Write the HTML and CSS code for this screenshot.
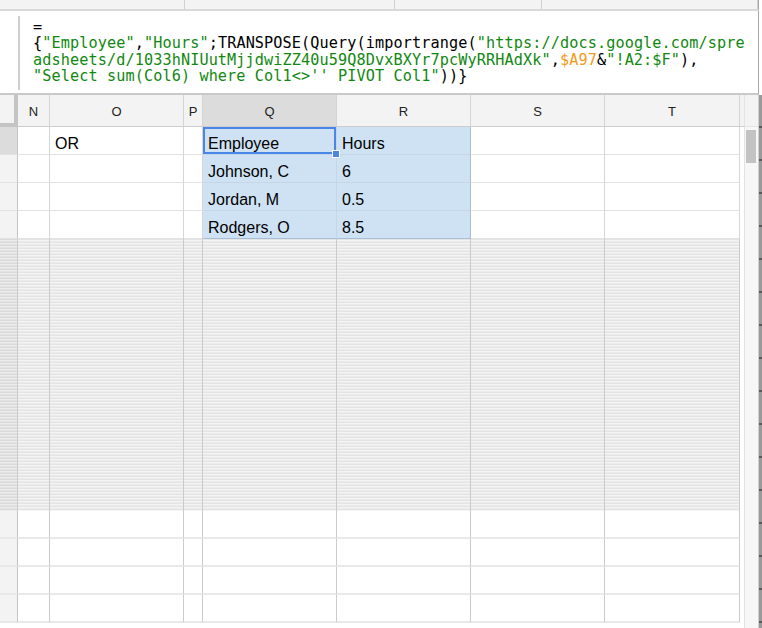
FILE: index.html
```html
<!DOCTYPE html>
<html>
<head>
<meta charset="utf-8">
<link rel="stylesheet" href="styles.css">
</head>
<body>
<div class="app">
  <div class="topstrip">
    <div class="ts c1"></div><div class="ts c2"></div><div class="ts c3"></div><div class="ts c4"></div><div class="ts c5"></div>
  </div>
  <div class="formula">
    <div class="fx">
      <div class="ln">=</div>
      <div class="ln">{<span class="g">"Employee"</span>,<span class="g">"Hours"</span>;TRANSPOSE(Query(importrange(<span class="g">"https://docs.google.com/spre</span></div>
      <div class="ln"><span class="g">adsheets/d/1033hNIUutMjjdwiZZ40u59Q8DvxBXYr7pcWyRRHAdXk"</span>,<span class="o">$A97</span>&amp;<span class="g">"!A2:$F"</span>),</div>
      <div class="ln"><span class="g">"Select sum(Col6) where Col1&lt;&gt;'' PIVOT Col1"</span>))}</div>
    </div>
  </div>
  <div class="sheet">
    <div class="grid">
      <div class="row hdr">
        <div class="cell rh corner"></div>
        <div class="cell ch">N</div>
        <div class="cell ch">O</div>
        <div class="cell ch">P</div>
        <div class="cell ch sel">Q</div>
        <div class="cell ch">R</div>
        <div class="cell ch">S</div>
        <div class="cell ch">T</div>
      </div>
      <div class="row">
        <div class="cell rh rsel"></div>
        <div class="cell"></div>
        <div class="cell">OR</div>
        <div class="cell"></div>
        <div class="cell rng active">Employee<span class="handle"></span></div>
        <div class="cell rng rr">Hours</div>
        <div class="cell"></div>
        <div class="cell"></div>
      </div>
      <div class="row">
        <div class="cell rh"></div>
        <div class="cell"></div>
        <div class="cell"></div>
        <div class="cell"></div>
        <div class="cell rng">Johnson, C</div>
        <div class="cell rng rr">6</div>
        <div class="cell"></div>
        <div class="cell"></div>
      </div>
      <div class="row">
        <div class="cell rh"></div>
        <div class="cell"></div>
        <div class="cell"></div>
        <div class="cell"></div>
        <div class="cell rng">Jordan, M</div>
        <div class="cell rng rr">0.5</div>
        <div class="cell"></div>
        <div class="cell"></div>
      </div>
      <div class="row">
        <div class="cell rh"></div>
        <div class="cell"></div>
        <div class="cell"></div>
        <div class="cell"></div>
        <div class="cell rng rb">Rodgers, O</div>
        <div class="cell rng rr rb">8.5</div>
        <div class="cell"></div>
        <div class="cell"></div>
      </div>
      <div class="row hidden">
        <div class="cell rh"></div>
        <div class="cell"></div>
        <div class="cell"></div>
        <div class="cell"></div>
        <div class="cell"></div>
        <div class="cell"></div>
        <div class="cell"></div>
        <div class="cell"></div>
      </div>
      <div class="row lo">
        <div class="cell rh"></div><div class="cell"></div><div class="cell"></div><div class="cell"></div><div class="cell"></div><div class="cell"></div><div class="cell"></div><div class="cell"></div>
      </div>
      <div class="row lo">
        <div class="cell rh"></div><div class="cell"></div><div class="cell"></div><div class="cell"></div><div class="cell"></div><div class="cell"></div><div class="cell"></div><div class="cell"></div>
      </div>
      <div class="row lo">
        <div class="cell rh"></div><div class="cell"></div><div class="cell"></div><div class="cell"></div><div class="cell"></div><div class="cell"></div><div class="cell"></div><div class="cell"></div>
      </div>
      <div class="row lo">
        <div class="cell rh"></div><div class="cell"></div><div class="cell"></div><div class="cell"></div><div class="cell"></div><div class="cell"></div><div class="cell"></div><div class="cell"></div>
      </div>
    </div>
    <div class="gutter">
      <div class="ghead"></div>
    </div>
    <div class="vscroll">
      <div class="vhead"></div>
      <div class="track"><div class="thumb"></div></div>
    </div>
    <div class="edge"></div>
  </div>
</div>
</body>
</html>
```

FILE: styles.css
```css
* { box-sizing: border-box; }
html, body { margin: 0; padding: 0; background: #fff; }
body { width: 762px; height: 628px; overflow: hidden; font-family: "Liberation Sans", Arial, sans-serif; }

.app { width: 762px; height: 628px; display: flex; flex-direction: column; }

.topstrip {
  height: 11px; flex: none; display: flex;
  background: #f3f3f3; border-bottom: 2px solid #d9d9d9;
  border-right: 1px solid #a8a8a8; width: 759px;
}
.ts { height: 100%; border-right: 1px solid #d0d0d0; }
.ts.c1 { width: 185px; }
.ts.c2 { width: 210px; }
.ts.c3 { width: 147px; }
.ts.c4 { width: 215px; border-right: none; }

.formula {
  height: 84px; flex: none; width: 759px;
  padding: 5px 0 3px 18px;
  border-bottom: 2px solid #c9c9c9;
  border-right: 1px solid #a8a8a8;
  background: #fff;
}
.fx {
  height: 100%;
  border-left: 2px solid #cfcfcf;
  padding: 3px 0 0 13px;
  font-family: "DejaVu Sans Mono", "Liberation Mono", monospace;
  font-size: 15.2px; line-height: 16.3px; color: #000;
  letter-spacing: 0.1px;
}
.ln { height: 16.3px; white-space: pre; }
.g { color: #118811; }
.o { color: #f39a1e; }

.sheet { flex: 1; display: flex; min-height: 0; }
.grid { width: 740px; flex: none; display: flex; flex-direction: column; }

.row {
  display: grid;
  grid-template-columns: 18px 32px 134px 19px 134px 134px 134px 135px;
  height: 28px; flex: none;
}
.cell {
  border-right: 1px solid #d6d6d6;
  border-bottom: 1px solid #e2e2e2;
  font-size: 16px; color: #000;
  padding: 6px 0 0 5px;
  display: flex; align-items: center;
  position: relative;
  white-space: nowrap;
}
.row.hdr { height: 32px; }
.ch {
  background: #f3f3f3; border-bottom: 1px solid #cccccc; border-right-color: #d4d4d4;
  justify-content: center; padding: 1px 0 0 0; font-size: 13px; color: #222;
}
.ch.sel { background: #dcdcdc; }
.rh { background: #f3f3f3; border-right: 1px solid #c4c4c4; padding: 0; }
.rh.rsel { background: #dcdcdc; }
.corner {
  border-right: 4px solid #c4c4c4; border-bottom: 4px solid #c4c4c4;
  background: #f3f3f3;
}

.rng { background: #cfe2f3; border-bottom-color: #c5d6e6; border-right-color: #c5d6e6; }
.rng.rr { border-right-color: #a7bed6; }
.rng.rb { border-bottom-color: #a7bed6; }
.active { box-shadow: inset 0 0 0 2px #4a86e8; }
.handle {
  position: absolute; right: -4px; bottom: -4px;
  width: 8px; height: 8px; background: #4a86e8;
  border: 1px solid #fff; z-index: 2;
}

.row.hidden { height: 272px; }
.hidden .cell {
  border-bottom: none;
  background: repeating-linear-gradient(to bottom, #e4e4e4 0 1px, #f4f4f4 1px 2px, #ebebeb 2px 3px);
  border-right-color: #cbcbcb;
}
.hidden .rh {
  background: repeating-linear-gradient(to bottom, #dadada 0 1px, #ececec 1px 2px, #e2e2e2 2px 3px);
}
.lo .cell { border-bottom: 2px solid #e9e9e9; border-right-color: #cbcbcb; }
.lo .rh { background: #f3f3f3; border-right-color: #c4c4c4; }

.gutter { width: 4px; flex: none; display: flex; flex-direction: column; }
.ghead { height: 32px; background: #f3f3f3; border-bottom: 1px solid #cccccc; }

.vscroll { width: 14px; flex: none; display: flex; flex-direction: column; border-left: 1px solid #e3e3e3; }
.vhead { height: 31px; background: #f3f3f3; }
.track { flex: 1; background: #f7f7f7; padding: 3px 0 0 1px; border-top: 1px solid #e3e3e3; }
.thumb { width: 10px; height: 33px; background: #c3c3c3; }

.edge {
  flex: 1;
  background: repeating-linear-gradient(to bottom, #9a9a9a 0 31px, #5a5a5a 31px 33px);
  border-left: 1px solid #d0d0d0;
}
```
